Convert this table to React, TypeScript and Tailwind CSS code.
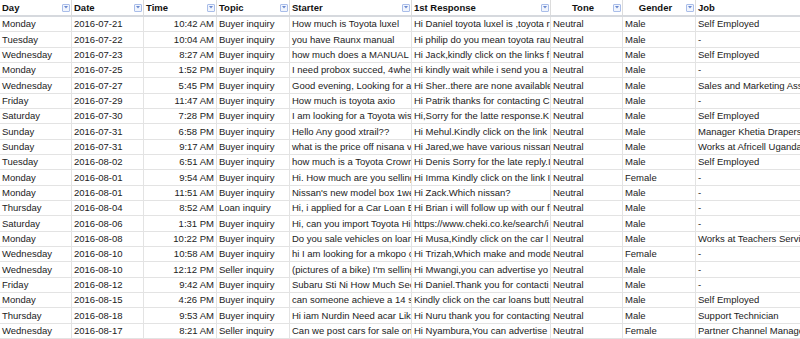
import React from "react";

type Col = { key: string; w: string; align?: "left" | "right" | "center"; hAlign?: "left" | "center" };

const cols: Col[] = [
  { key: "Day", w: "w-[72px]" },
  { key: "Date", w: "w-[72px]" },
  { key: "Time", w: "w-[73px]", align: "right" },
  { key: "Topic", w: "w-[73px]" },
  { key: "Starter", w: "w-[122px]" },
  { key: "1st Response", w: "w-[139px]" },
  { key: "Tone", w: "w-[72px]", hAlign: "center" },
  { key: "Gender", w: "w-[73px]", hAlign: "center" },
  { key: "Job", w: "flex-1" },
];

const rows: string[][] = [
  ["Monday", "2016-07-21", "10:42 AM", "Buyer inquiry", "How much is Toyota luxel", "Hi Daniel toyota luxel is ,toyota r", "Neutral", "Male", "Self Employed"],
  ["Tuesday", "2016-07-22", "10:04 AM", "Buyer inquiry", "you have Raunx manual", "Hi philip do you mean toyota rau", "Neutral", "Male", "-"],
  ["Wednesday", "2016-07-23", "8:27 AM", "Buyer inquiry", "how much does a MANUAL", "Hi Jack,kindly click on the links f", "Neutral", "Male", "Self Employed"],
  ["Monday", "2016-07-25", "1:52 PM", "Buyer inquiry", "I need probox succed, 4whe", "Hi kindly wait while i send you a", "Neutral", "Male", "-"],
  ["Wednesday", "2016-07-27", "5:45 PM", "Buyer inquiry", "Good evening,  Looking for a", "Hi Sher..there are none available", "Neutral", "Male", "Sales and Marketing Ass"],
  ["Friday", "2016-07-29", "11:47 AM", "Buyer inquiry", "How much is toyota axio", "Hi Patrik thanks for contacting C", "Neutral", "Male", "-"],
  ["Saturday", "2016-07-30", "7:28 PM", "Buyer inquiry", "I am looking for a Toyota wis", "Hi,Sorry for the latte response.K", "Neutral", "Male", "Self Employed"],
  ["Sunday", "2016-07-31", "6:58 PM", "Buyer inquiry", "Hello Any good xtrail??", "Hi Mehul.Kindly click on the link", "Neutral", "Male", "Manager Khetia Drapers"],
  ["Sunday", "2016-07-31", "9:17 AM", "Buyer inquiry", "what is the price off nisana v", "Hi Jared,we have various nissan", "Neutral", "Male", "Works at Africell Uganda"],
  ["Tuesday", "2016-08-02", "6:51 AM", "Buyer inquiry", "how much is a Toyota Crown", "Hi Denis Sorry for the late reply.I", "Neutral", "Male", "Self Employed"],
  ["Monday", "2016-08-01", "9:54 AM", "Buyer inquiry", "Hi. How much are you selling", "Hi Imma Kindly click on the link I", "Neutral", "Female", "-"],
  ["Monday", "2016-08-01", "11:51 AM", "Buyer inquiry", "Nissan's new model box 1we", "Hi Zack.Which nissan?", "Neutral", "Male", "-"],
  ["Thursday", "2016-08-04", "8:52 AM", "Loan inquiry", "Hi, i applied for a Car Loan E", "Hi Brian i will follow up with our f", "Neutral", "Male", "-"],
  ["Saturday", "2016-08-06", "1:31 PM", "Buyer inquiry", "Hi, can you import Toyota Hi", "https://www.cheki.co.ke/search/i", "Neutral", "Male", "-"],
  ["Monday", "2016-08-08", "10:22 PM", "Buyer inquiry", "Do you sale vehicles on loar", "Hi Musa,Kindly click on the car l", "Neutral", "Male", "Works at Teachers Servi"],
  ["Wednesday", "2016-08-10", "10:58 AM", "Buyer inquiry", "hi I am looking for a mkopo c", "Hi Trizah,Which make and mode", "Neutral", "Female", "-"],
  ["Wednesday", "2016-08-10", "12:12 PM", "Seller inquiry", "(pictures of a bike) I'm selling", "Hi Mwangi,you can advertise yo", "Neutral", "Male", "-"],
  ["Friday", "2016-08-12", "9:42 AM", "Buyer inquiry", "Subaru Sti Ni How Much Sec", "Hi Daniel.Thank you for contacti", "Neutral", "Male", "-"],
  ["Monday", "2016-08-15", "4:26 PM", "Buyer inquiry", "can someone achieve a 14 s", "Kindly click on the car loans butt", "Neutral", "Male", "Self Employed"],
  ["Thursday", "2016-08-18", "9:53 AM", "Buyer inquiry", "Hi iam Nurdin Need acar Lik", "Hi Nuru thank you for contacting", "Neutral", "Male", "Support Technician"],
  ["Wednesday", "2016-08-17", "8:21 AM", "Seller inquiry", "Can we post cars for sale on", "Hi Nyambura,You can advertise", "Neutral", "Female", "Partner Channel Manage"],
];

function FilterIcon() {
  return (
    <span className="flex items-center justify-center w-[8px] h-[8px] border border-[#a9bde9] bg-[#f1f5fd] rounded-[1px] shrink-0 mr-[1px]">
      <svg width="4" height="3" viewBox="0 0 4 3">
        <path d="M0 0 L4 0 L2 2.5 Z" fill="#6a88cf" />
      </svg>
    </span>
  );
}

export default function App() {
  return (
    <div
      className="w-[800px] h-[339px] overflow-hidden bg-white text-[9.5px] leading-none text-[#222]"
      style={{ fontFamily: '"Liberation Sans", Arial, sans-serif' }}
    >
      <div className="flex h-[17px] border-b-2 border-[#d6d9de] bg-white">
        {cols.map((c, i) => (
          <div
            key={c.key}
            className={`${c.w} ${i < cols.length - 1 ? "shrink-0 border-r border-[#dcdcdc]" : "min-w-0"} flex items-center pl-[2px] overflow-hidden`}
          >
            <span
              className={`flex-1 font-bold text-[#111] whitespace-nowrap ${c.hAlign === "center" ? "text-center" : "text-left"}`}
            >
              {c.key}
            </span>
            {i < cols.length - 1 && <FilterIcon />}
          </div>
        ))}
      </div>
      {rows.map((r, ri) => (
        <div key={ri} className="flex h-[15.33px] border-b border-[#e3e3e3]">
          {r.map((cell, ci) => {
            const c = cols[ci];
            return (
              <div
                key={ci}
                className={`${c.w} ${ci < cols.length - 1 ? "shrink-0 border-r border-[#e3e3e3]" : "min-w-0"} flex items-center overflow-hidden whitespace-nowrap ${c.align === "right" ? "justify-end pr-[2px]" : "pl-[2px]"}`}
              >
                {cell}
              </div>
            );
          })}
        </div>
      ))}
    </div>
  );
}
